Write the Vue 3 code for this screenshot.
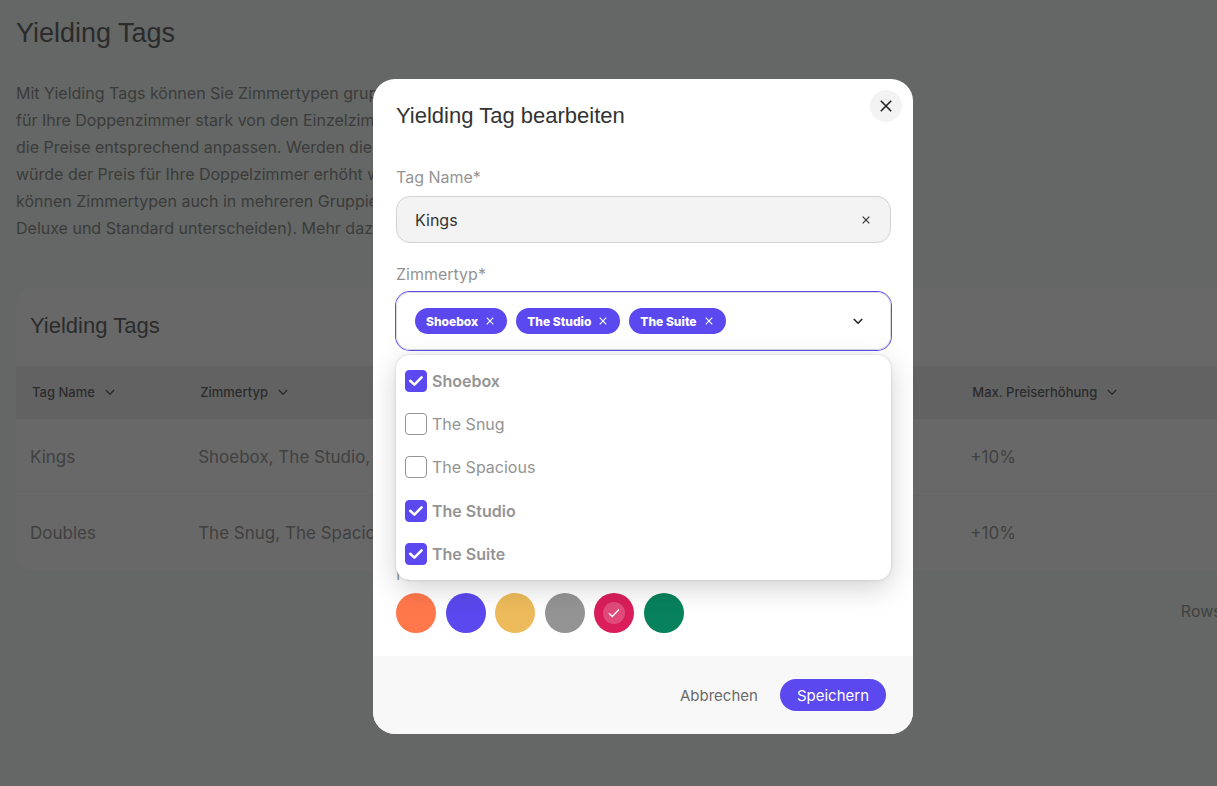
<script setup>
import { ref } from 'vue'

const intro = [
  'Mit Yielding Tags können Sie Zimmertypen gruppieren.',
  'für Ihre Doppenzimmer stark von den Einzelzimmern',
  'die Preise entsprechend anpassen. Werden die Doppel',
  'würde der Preis für Ihre Doppelzimmer erhöht wird',
  'können Zimmertypen auch in mehreren Gruppierung',
  'Deluxe und Standard unterscheiden). Mehr dazu',
]
const columns = ['Tag Name', 'Zimmertyp', 'Max. Preiserhöhung']
const rows = [
  { name: 'Kings', types: 'Shoebox, The Studio, The Suite', max: '+10%' },
  { name: 'Doubles', types: 'The Snug, The Spacious', max: '+10%' },
]
const tagName = ref('Kings')
const options = ['Shoebox', 'The Snug', 'The Spacious', 'The Studio', 'The Suite']
const selected = ref(['Shoebox', 'The Studio', 'The Suite'])
const colors = [
  { id: 'orange', label: 'Orange' },
  { id: 'violet', label: 'Violett' },
  { id: 'yellow', label: 'Gelb' },
  { id: 'gray', label: 'Grau' },
  { id: 'red', label: 'Rot' },
  { id: 'green', label: 'Grün' },
]
const color = ref('red')
const remove = (name) => {
  selected.value = selected.value.filter((item) => item !== name)
}
</script>

<template>
  <div class="app">
    <main class="page">
      <h1>Yielding Tags</h1>
      <p class="intro">
        <span v-for="line in intro" :key="line">{{ line }}</span>
      </p>
      <section class="card">
        <h2>Yielding Tags</h2>
        <table>
          <colgroup>
            <col class="col-name" />
            <col class="col-types" />
            <col />
          </colgroup>
          <thead>
            <tr>
              <th v-for="column in columns" :key="column">
                <button type="button" class="sort">
                  {{ column }}
                  <svg width="12" height="12" viewBox="0 0 12 12"><path d="M1.8 4 6 8.2 10.2 4" /></svg>
                </button>
              </th>
            </tr>
          </thead>
          <tbody>
            <tr v-for="row in rows" :key="row.name">
              <td>{{ row.name }}</td>
              <td>{{ row.types }}</td>
              <td>{{ row.max }}</td>
            </tr>
          </tbody>
        </table>
      </section>
      <div class="pager">Rows per page</div>
    </main>

    <div class="overlay">
      <form class="modal" role="dialog" aria-labelledby="modal-title" @submit.prevent>
        <header class="modal-head">
          <h2 id="modal-title">Yielding Tag bearbeiten</h2>
          <button type="button" class="close" aria-label="Schließen">
            <svg width="12" height="12" viewBox="0 0 12 12"><path d="M.8.8l10.4 10.4M11.2.8.8 11.2" /></svg>
          </button>
        </header>

        <div class="modal-body">
          <label class="label" for="tag-name">Tag Name*</label>
          <div class="input">
            <input id="tag-name" v-model="tagName" type="text" />
            <button type="button" class="clear" aria-label="Leeren" @click="tagName = ''">
              <svg width="8" height="8" viewBox="0 0 8 8"><path d="M.7.7l6.6 6.6M7.3.7.7 7.3" /></svg>
            </button>
          </div>

          <span id="types-label" class="label types-label">Zimmertyp*</span>
          <div class="select-wrap">
            <div class="select" role="group" aria-labelledby="types-label">
              <span v-for="name in selected" :key="name" class="chip">
                {{ name }}
                <button type="button" :aria-label="name + ' entfernen'" @click="remove(name)">
                  <svg width="8" height="8" viewBox="0 0 8 8"><path d="M.7.7l6.6 6.6M7.3.7.7 7.3" /></svg>
                </button>
              </span>
              <button type="button" class="toggle" aria-label="Optionen">
                <svg width="10" height="10" viewBox="0 0 10 10"><path d="M.8 3 5 7.2 9.2 3" /></svg>
              </button>
            </div>
            <div class="menu">
              <label v-for="name in options" :key="name" class="option">
                <input v-model="selected" type="checkbox" :value="name" />
                <svg class="tick" width="22" height="22" viewBox="0 0 22 22"><path d="M5.2 10.8 9.4 14.6 16.6 7.4" /></svg>
                <span>{{ name }}</span>
              </label>
            </div>
          </div>

          <fieldset class="colors">
            <legend class="label">Farbe*</legend>
            <div class="swatches">
              <label v-for="item in colors" :key="item.id" class="swatch" :class="item.id">
                <input v-model="color" type="radio" name="color" :value="item.id" :aria-label="item.label" />
                <span v-if="color === item.id" class="mark">
                  <svg width="12" height="10" viewBox="0 0 12 10"><path d="M1 5.2 4.2 8.4 11 1.4" /></svg>
                </span>
              </label>
            </div>
          </fieldset>
        </div>

        <footer>
          <button type="button" class="cancel">Abbrechen</button>
          <button type="submit" class="save">Speichern</button>
        </footer>
      </form>
    </div>
  </div>
</template>

<style>
html,
body,
#app {
  height: 100%;
}
body {
  margin: 0;
}
</style>

<style scoped>
* {
  box-sizing: border-box;
}
.app {
  position: relative;
  height: 100%;
  overflow: hidden;
  background: #f0faf4;
  font-family: Inter, 'Liberation Sans', sans-serif;
  color: #6a6a6a;
}
button {
  padding: 0;
  border: 0;
  background: none;
  font: inherit;
  color: inherit;
  cursor: pointer;
}
svg {
  display: block;
  fill: none;
  stroke: currentColor;
  stroke-width: 1.4;
}
h1,
h2 {
  margin: 0;
  font-family: 'Liberation Sans', Arial, sans-serif;
  font-weight: 400;
  color: #333;
}
h1 {
  font-size: 27px;
  line-height: 32px;
}
h2 {
  font-size: 22px;
  line-height: 28px;
}
.page {
  padding: 17px 0 0 16px;
}
.intro {
  margin: 31px 0 46px;
  font-size: 16px;
  line-height: 27px;
}
.intro span {
  display: block;
  white-space: nowrap;
}
.card {
  border-radius: 16px 0 0 16px;
  overflow: hidden;
  background: #fff;
}
.card h2 {
  padding: 24px 14px 26px;
}
table {
  width: 100%;
  border-collapse: collapse;
  table-layout: fixed;
}
.col-name {
  width: 14%;
}
.col-types {
  width: 64.3%;
}
th {
  height: 53px;
  padding: 0 16px 1px;
  background: #eaeaea;
  text-align: left;
  font-size: 13px;
  font-weight: 500;
  color: #333;
}
.sort {
  display: flex;
  align-items: center;
  gap: 9px;
  white-space: nowrap;
}
td {
  height: 76px;
  padding: 0 14px;
  font-size: 17px;
  color: #7a7a7a;
}
tbody tr + tr {
  border-top: 1px solid #f6f6f6;
}
.pager {
  display: flex;
  justify-content: flex-end;
  margin: 30px -77px 0 0;
  font-size: 16px;
  line-height: 20px;
  color: #7a7a7a;
  white-space: nowrap;
}
.overlay {
  position: absolute;
  inset: 0;
  display: flex;
  align-items: center;
  justify-content: center;
  padding: 27px 0 0 69px;
  background: rgba(40, 40, 40, 0.7);
}
.modal {
  width: 540px;
  max-width: 100%;
  border-radius: 22px;
  background: #fff;
}
.modal-head {
  display: flex;
  align-items: flex-start;
  justify-content: space-between;
  padding: 11px 11px 0 23px;
}
.modal-head h2 {
  padding-top: 12px;
}
.close {
  display: grid;
  place-items: center;
  width: 32px;
  height: 32px;
  border-radius: 50%;
  background: #f3f3f3;
  color: #222;
}
.close svg {
  stroke-width: 1.6;
}
.modal-body {
  padding: 37px 22px 23px 23px;
}
.label {
  display: block;
  padding: 0;
  font-size: 16px;
  line-height: 20px;
  color: #949494;
}
.input {
  display: flex;
  align-items: center;
  height: 47px;
  margin-top: 9px;
  padding: 0 20px 0 18px;
  border: 1px solid #d2d2d2;
  border-radius: 14px;
  background: #f3f3f3;
}
.input input {
  flex: 1;
  min-width: 0;
  padding: 0;
  border: 0;
  outline: 0;
  background: none;
  font: inherit;
  font-size: 16px;
  color: #333;
}
.clear {
  color: #333;
}
.clear svg {
  stroke-width: 1.2;
}
.types-label {
  margin-top: 21px;
}
.select-wrap {
  position: relative;
  margin-top: 8px;
}
.select {
  display: flex;
  align-items: center;
  gap: 9px;
  height: 58px;
  padding: 0 28px 0 19px;
  border-radius: 14px;
  box-shadow: 0 0 0 1px #5b48ee, inset 0 0 0 1px #dcdce0;
}
.chip {
  display: flex;
  align-items: center;
  gap: 8px;
  height: 26px;
  padding: 0 13px 0 11px;
  border-radius: 13px;
  background: #5b48ee;
  font-size: 12px;
  font-weight: 800;
  color: #fff;
  white-space: nowrap;
}
.chip svg {
  stroke-width: 1.1;
}
.toggle {
  margin-left: auto;
  color: #222;
}
.toggle svg {
  stroke-width: 1.6;
}
.menu {
  position: absolute;
  top: calc(100% + 5px);
  left: 0;
  right: 0;
  z-index: 1;
  display: grid;
  grid-template-rows: repeat(5, 1fr);
  height: 225px;
  padding: 4px 9px;
  border-radius: 14px;
  background: #fff;
  box-shadow: 0 0 3px rgba(0, 0, 0, 0.16), 0 8px 28px rgba(0, 0, 0, 0.18);
}
.option {
  position: relative;
  display: flex;
  align-items: center;
  gap: 5px;
  font-size: 16px;
  line-height: 22px;
  color: #949494;
}
.option input {
  appearance: none;
  width: 22px;
  height: 22px;
  margin: 0;
  border: 1px solid #949494;
  border-radius: 4px;
}
.option input:checked {
  border-color: #5b48ee;
  background: #5b48ee;
}
.option input:checked ~ span {
  font-weight: 600;
}
.tick {
  position: absolute;
  left: 0;
  color: #fff;
  stroke-width: 2.6;
  stroke-linecap: round;
  stroke-linejoin: round;
}
.colors {
  min-width: 0;
  margin: 214px 0 0;
  padding: 0;
  border: 0;
}
.swatches {
  display: flex;
  justify-content: space-between;
  max-width: 288px;
  margin-top: 9px;
}
.swatch {
  display: grid;
  place-items: center;
  width: 40px;
  height: 40px;
  border-radius: 50%;
}
.swatch input {
  grid-area: 1 / 1;
  appearance: none;
  width: 40px;
  height: 40px;
  margin: 0;
  border-radius: 50%;
}
.mark {
  grid-area: 1 / 1;
  display: grid;
  place-items: center;
  width: 22px;
  height: 22px;
  border-radius: 50%;
  background: rgba(255, 255, 255, 0.2);
  color: #fff;
}
.orange { background: #ff784b; }
.violet { background: #5b48ee; }
.yellow { background: #edbb5b; }
.gray { background: #949494; }
.red { background: #da1e5b; }
.green { background: #07825c; }
footer {
  display: flex;
  align-items: center;
  justify-content: flex-end;
  gap: 22px;
  height: 78px;
  padding: 0 27px;
  border-radius: 0 0 22px 22px;
  background: #f8f8f8;
  font-size: 15px;
}
.cancel {
  color: #6a6a6a;
}
.save {
  height: 32px;
  padding: 0 17px;
  border-radius: 16px;
  background: #5b48ee;
  color: #fff;
}
</style>
